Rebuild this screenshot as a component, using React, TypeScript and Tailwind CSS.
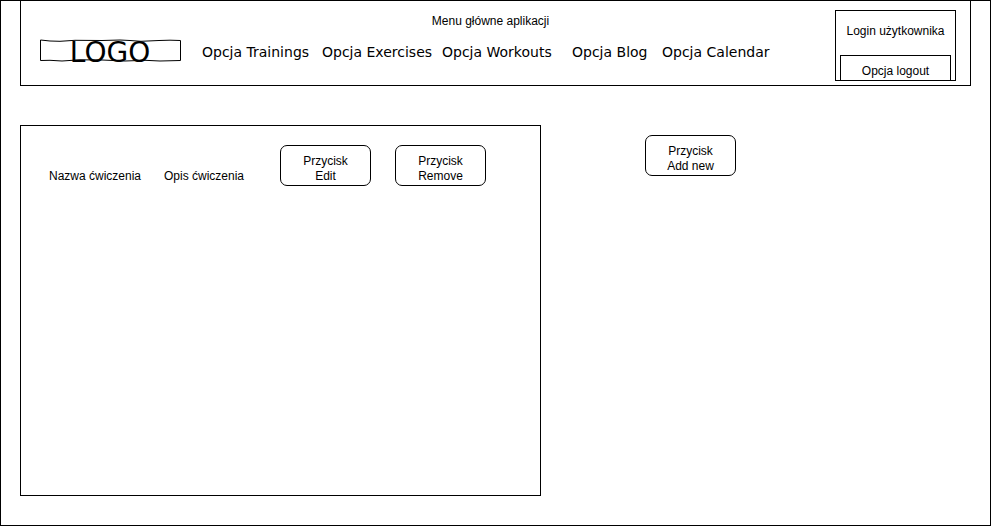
import React from "react";

const menuItems = [
  { label: "Opcja Trainings", width: "w-[120px]" },
  { label: "Opcja Exercises", width: "w-[120px]" },
  { label: "Opcja Workouts", width: "w-[130px]" },
  { label: "Opcja Blog", width: "w-[90px]" },
  { label: "Opcja Calendar", width: "w-[110px]" },
];

const exercises = [{ name: "Nazwa ćwiczenia", description: "Opis ćwiczenia" }];

function ActionButton({ action }: { action: string }) {
  return (
    <button
      type="button"
      className="flex h-[41px] w-[91px] shrink-0 flex-col items-center rounded-[7px] border border-black bg-white pt-[8px] leading-[15px]"
    >
      <span>Przycisk</span>
      <span>{action}</span>
    </button>
  );
}

function Logo() {
  return (
    <a href="#" className="relative flex h-[23px] w-[142px] shrink-0 justify-center pt-[2px] pr-[2px]">
      <svg
        aria-hidden="true"
        viewBox="0 0 142 23"
        className="absolute inset-0 h-full w-full"
        fill="none"
        stroke="black"
      >
        <path d="M.5 1 L10 2 L20 2.3 L35 1.3 L62 1.5 L80 1 L90 1.5 L101 2.3 L119 1.5 L130 1.2 L140.5 1.5 L140.5 21.5 L120 22 L105 21.3 L85 22 L62 21 L40 20.8 L22 22 L10 21.3 L.5 21.5 Z" />
      </svg>
      <span className="relative font-['DejaVu_Sans',sans-serif] text-[28px] leading-[23px]">LOGO</span>
    </a>
  );
}

export default function App() {
  return (
    <div className="flex min-h-screen flex-col border border-black bg-white px-[19px] pb-[29px] font-['Liberation_Sans',Arial,sans-serif] text-[12px] leading-[15px] text-black">
      <header className="flex h-[85px] items-start border-x border-b border-black pr-[14px] pl-[19px]">
        <div className="mt-[38px]">
          <Logo />
        </div>
        <div className="mr-[56px] ml-[20px] flex-1 pt-[13px]">
          <h1 className="text-center">Menu główne aplikacji</h1>
          <nav className="mt-[13px] flex font-['DejaVu_Sans',sans-serif] text-[14px] leading-[20px] whitespace-nowrap">
            {menuItems.map((item) => (
              <a key={item.label} href="#" className={item.width}>
                {item.label}
              </a>
            ))}
          </nav>
        </div>
        <div className="mt-[9px] flex h-[71px] w-[121px] shrink-0 flex-col items-center justify-between border border-black px-[4px] pt-[13px]">
          <span className="whitespace-nowrap">Login użytkownika</span>
          <button type="button" className="h-[25px] w-full border-x border-t border-black pt-[6px]">
            Opcja logout
          </button>
        </div>
      </header>

      <main className="mt-[39px] grid flex-1 grid-cols-[521fr_430fr]">
        <ul className="border border-black pt-[19px] pl-[28px]">
          {exercises.map((exercise) => (
            <li key={exercise.name} className="flex items-start whitespace-nowrap">
              <span className="w-[115px] pt-[24px]">{exercise.name}</span>
              <span className="w-[116px] pt-[24px]">{exercise.description}</span>
              <div className="flex gap-[24px]">
                <ActionButton action="Edit" />
                <ActionButton action="Remove" />
              </div>
            </li>
          ))}
        </ul>
        <div className="pt-[10px] pl-[104px]">
          <ActionButton action="Add new" />
        </div>
      </main>
    </div>
  );
}
